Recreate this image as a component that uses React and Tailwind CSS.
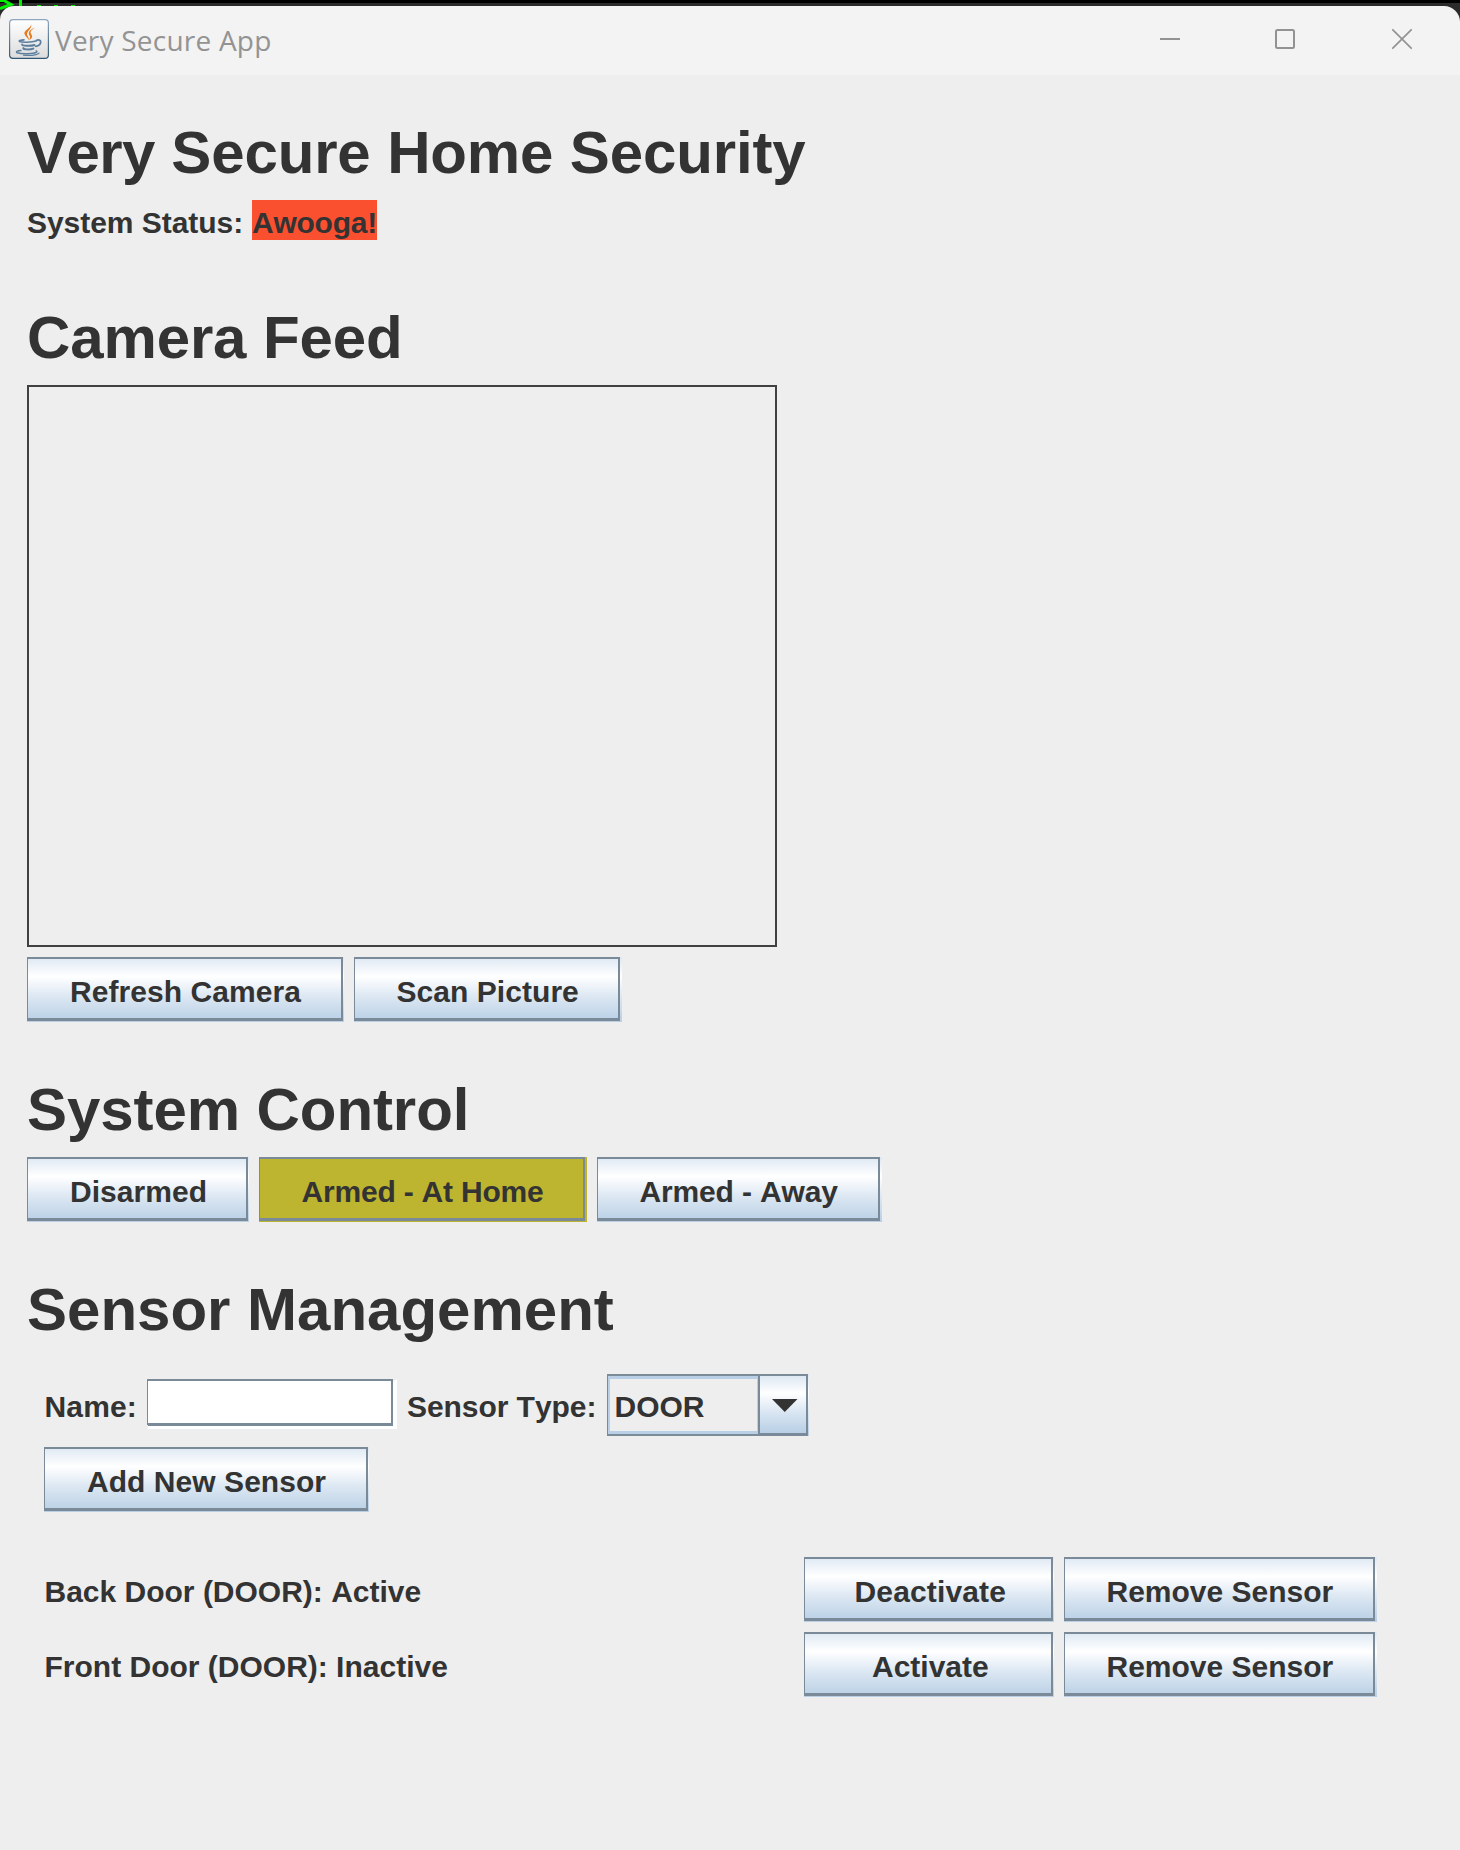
import React from "react";

const OCEAN =
  "bg-[linear-gradient(to_bottom,#dde8f3_0%,#ffffff_30%,#dde8f3_60%,#b8cfe5_100%)]";

function MetalButton({ children, className = "", inner = "", fill = OCEAN }) {
  return (
    <button type="button" className={`flex h-[65px] shrink-0 pb-px ${fill} ${className}`}>
      <span
        className={`flex h-full w-full border-t-2 border-r-2 border-b-[3px] border-l border-[#7a8a99] pt-[16px] text-left leading-[34px] font-bold whitespace-nowrap ${inner}`}
      >
        {children}
      </span>
    </button>
  );
}

function Heading({ children, className = "" }) {
  return (
    <h1 className={`h-[67px] text-[60px] leading-[67px] font-bold whitespace-nowrap ${className}`}>
      {children}
    </h1>
  );
}

function JavaIcon() {
  return (
    <svg width="40" height="40" viewBox="0 0 40 40" fill="none">
      <defs>
        <linearGradient id="tile" x1="0" y1="0" x2="0" y2="1">
          <stop offset="0" stopColor="#ffffff" />
          <stop offset="1" stopColor="#dcdcdc" />
        </linearGradient>
        <linearGradient id="edge" x1="0" y1="0" x2="0" y2="1">
          <stop offset="0" stopColor="#8fa6bd" />
          <stop offset="1" stopColor="#2f5672" />
        </linearGradient>
      </defs>
      <rect x="0.6" y="0.6" width="38.8" height="38.8" rx="3.4" fill="url(#tile)" stroke="url(#edge)" strokeWidth="1.2" />
      <path d="M21.8 4c2.2 4.600-7 6.800-6.400 10.600.3 2.400 3.200 4.200 4.800 6.600-.4-3-2.200-4.300-2.200-6.100 0-3.400 6-5.600 3.800-11.100Z" fill="#e8791c" />
      <path d="M26 8.800c-3.600 1.200-6.600 3.400-6.200 6 .2 1.500 1.800 2.400 1.300 3.900-.2.900-.8 1.700-1.300 2.300 2.400-1 3.800-2.500 3.200-4.300-.4-1.400-1.700-2-1.400-3.600.3-1.700 2.400-3.200 4.400-4.300Z" fill="#e8791c" />
      <g stroke="#5c7fa0" strokeLinecap="round">
        <path d="M15 20.900c-3.500.2-5.500.9-4.500 1.600 2.200 1 12.500 1 16.500-.5" strokeWidth="1.600" />
        <path d="M27.500 21.400c2-.9 4.300-.3 4.200 1.700-.1 2.200-2.500 3.800-5 4.300" strokeWidth="1.700" />
        <path d="M13.200 25.400c-1.400 1.500 8.800 1.900 12.300.6" strokeWidth="1.900" />
        <path d="M14.400 29.100c-1.100 1.500 6.800 1.800 10 .5" strokeWidth="1.900" />
        <path d="M12 31.600c-3.800.1-5.700 1.300-3.800 2.100 4.400 1.500 16.600 1.200 19.400-.6.500-.4.300-.9-.4-1.200" strokeWidth="1.500" />
        <path d="M14.500 36.200c5.500.5 12.500.2 15.500-2" strokeWidth="1.200" />
      </g>
    </svg>
  );
}

function TitleBar() {
  return (
    <header className="relative flex h-[69px] items-start rounded-tl-[14px] rounded-tr-[16px] bg-[#f3f3f3] pl-[9px] text-[#939393]">
      <div className="mt-[13px]">
        <JavaIcon />
      </div>
      <div className="mt-[15px] ml-[6px] font-['Open_Sans','Noto_Sans',sans-serif] text-[28px] leading-[38px] tracking-[0.220px] whitespace-nowrap">
        Very Secure App
      </div>
      <div className="mt-[22px] mr-[48px] ml-auto flex gap-[95px]">
        <svg width="20" height="22" fill="none" stroke="#929292" strokeWidth="2">
          <path d="M0 11H20" />
        </svg>
        <svg width="20" height="22" fill="none" stroke="#929292" strokeWidth="2">
          <rect x="1" y="2" width="18" height="18" rx="1.500" />
        </svg>
        <svg className="ml-[2px]" width="20" height="22" fill="none" stroke="#929292" strokeWidth="1.700">
          <path d="M0.300 1.300L19.700 20.700M19.700 1.300L0.300 20.700" />
        </svg>
      </div>
    </header>
  );
}

function SensorRow({ label, action, actionClass, className = "" }) {
  return (
    <div className={`flex h-[65px] ${className}`}>
      <div className="w-[760px] shrink-0 pt-[18px] pl-[0.500px] leading-[34px]">{label}</div>
      <MetalButton className="w-[250px] pr-px" inner={actionClass}>
        {action}
      </MetalButton>
      <MetalButton className="ml-[10px] w-[313px] pr-[2px]" inner="pl-[41.500px]">
        Remove Sensor
      </MetalButton>
    </div>
  );
}

export default function App() {
  return (
    <div className="h-[1850px] w-[1460px] overflow-hidden bg-[#eeeeee] font-['Liberation_Sans',Arial,sans-serif] text-[30px] font-bold text-[#333333] [font-kerning:none]">
      <div className="relative bg-[linear-gradient(to_bottom,#000000_3px,#2b2b2b_3px)] pt-[6px] font-normal">
        <svg className="absolute top-0 left-0" width="80" height="10" fill="none" stroke="#00f000" strokeWidth="3">
          <path d="M0 0.500H3M3 0L11 4.500L0 8.500M20.500 0V6" />
          <path d="M37 5.500H41M54 5.500H58M71 5.500H75" strokeWidth="1" />
        </svg>
        <TitleBar />
      </div>

      <main className="pl-[27px]">
        <Heading className="mt-[44px] tracking-[-0.130px]">
          <span className="tracking-[-0.600px]">Very</span> Secure Home Security
        </Heading>
        <div className="mt-[14px] flex h-[40px] leading-[34px]">
          <span className="w-[225px] pt-[6px] tracking-[-0.040px]">System Status:</span>
          <span className="w-[125px] bg-[#fb5030] pt-[6px] tracking-[-0.250px]">Awooga!</span>
        </div>

        <Heading className="mt-[64px] tracking-[-0.130px]">Camera Feed</Heading>
        <div className="mt-[14px] h-[562px] w-[750px] border-2 border-[#404040]" />
        <div className="mt-[10px] flex gap-[10px]">
          <MetalButton className="w-[317px] pr-px" inner="pl-[42px] tracking-[0.060px]">
            Refresh Camera
          </MetalButton>
          <MetalButton className="w-[268px] pr-[2px]" inner="pl-[41.500px] tracking-[0.050px]">
            Scan Picture
          </MetalButton>
        </div>

        <Heading className="mt-[54px] tracking-[-0.080px]">System Control</Heading>
        <div className="mt-[14px] flex gap-[10px]">
          <MetalButton className="w-[222px] pr-px" inner="pl-[42px] tracking-[0.060px]">
            Disarmed
          </MetalButton>
          <MetalButton className="w-[328px] pr-[2px]" fill="bg-[#bdb430]" inner="pl-[41.500px] tracking-[-0.200px]">
            Armed - At Home
          </MetalButton>
          <MetalButton className="w-[285px] pr-[2px]" inner="pl-[41.500px] tracking-[-0.150px]">
            Armed - Away
          </MetalButton>
        </div>

        <Heading className="mt-[54px]">Sensor Management</Heading>
        <div className="pl-[17px]">
          <div className="mt-[31px] flex h-[62px] leading-[34px]">
            <label className="w-[103px] pt-[16px] pl-[0.500px] tracking-[0.150px]">Name:</label>
            <div className="mt-[5px] h-[50px] w-[250px] bg-white [clip-path:polygon(0_0,246px_0,246px_3px,250px_0,250px_50px,1px_50px,1px_46px,0_46px)]">
              <div className="h-[47px] w-[246px] border-t-2 border-r-2 border-b-[3px] border-l border-[#7a8a99]" />
            </div>
            <label className="ml-[10px] w-[200px] pt-[16px] tracking-[-0.060px]">Sensor Type:</label>
            <div className={`flex h-[62px] w-[202px] pr-px ${OCEAN}`}>
              <div className="flex h-full w-full border-t-2 border-r-2 border-b-2 border-l border-[#7a8a99]">
                <div className="h-full w-[150px] border-t-[3px] border-r-[1px] border-b-[3px] border-l-2 border-[#b8cfe5] bg-[#eeeeee] pt-[11px] pl-[4.500px]">
                  DOOR
                </div>
                <div className={`flex h-full w-[48px] border-b border-l-2 border-[#7a8a99] pt-[23px] pl-[12px] ${OCEAN}`}>
                  <svg width="26" height="13">
                    <path d="M0 0H25.500L12.750 13Z" fill="#333333" />
                  </svg>
                </div>
              </div>
            </div>
          </div>
          <MetalButton className="mt-[11px] w-[325px] pr-px" inner="pl-[42px] tracking-[0.050px]">
            Add New Sensor
          </MetalButton>
          <SensorRow
            className="mt-[45px]"
            label="Back Door (DOOR): Active"
            action="Deactivate"
            actionClass="pl-[49.500px] tracking-[0.150px]"
          />
          <SensorRow
            className="mt-[10px]"
            label="Front Door (DOOR): Inactive"
            action="Activate"
            actionClass="pl-[67px]"
          />
        </div>
      </main>
    </div>
  );
}
